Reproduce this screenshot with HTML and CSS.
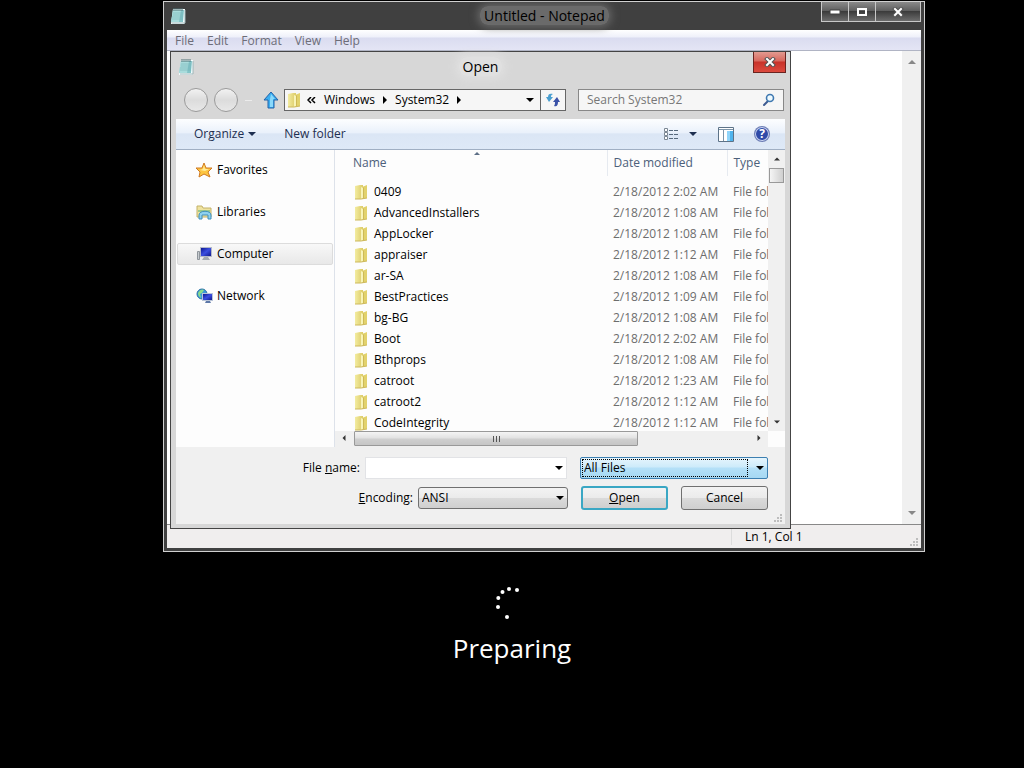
FILE: index.html
```html
<!DOCTYPE html>
<html lang="en">
<head>
    <meta charset="UTF-8">
    <meta name="viewport" content="width=device-width, initial-scale=1.0">
    <title>Untitled - Notepad</title>
    <link rel="stylesheet" href="styles.css">
</head>
<body>
    <!-- Shared icons -->
    <svg class="sprite" aria-hidden="true">
        <defs>
            <linearGradient id="g-folder" x1="0" x2="1">
                <stop offset="0" stop-color="#f3eca0"></stop>
                <stop offset="1" stop-color="#dccb68"></stop>
            </linearGradient>
            <linearGradient id="g-screen" x1="0" x2="1" y2="1">
                <stop offset="0" stop-color="#0d1690"></stop>
                <stop offset="0.5" stop-color="#3b4fe0"></stop>
                <stop offset="1" stop-color="#10188c"></stop>
            </linearGradient>
        </defs>
        <symbol id="folder" viewBox="0 0 14 16">
            <path d="M1 2l5-1h3v13l-3 1H1z" fill="url(#g-folder)"></path>
            <path d="M8 3l5-2v13l-5 1z" fill="#e2d26c"></path>
            <path d="M7 3l2 1v10l-2 1z" fill="#f8f4b8"></path>
            <path d="M9 4l1-1v11l-1 1z" fill="#cdb958"></path>
            <path d="M1 15h6l6-1" fill="none" stroke="#cdb95c"></path>
        </symbol>
        <symbol id="notepad" viewBox="0 0 16 18">
            <path d="M3 2h12v14l-1 1H1z" fill="#f5ffff"></path>
            <path d="M3 3h11l-1 12H1z" fill="#83c4c8"></path>
            <path d="M3 3h8L9 15H1z" fill="#a9dcdc"></path>
            <path d="M3 6h10M3 8h10M2 10h11M2 12h11" stroke="#6aa9ae" stroke-width="0.5"></path>
            <path d="M4 1v3M6 1v3M8 1v3M10 1v3M12 1v3" stroke="#4d6f73"></path>
            <path d="M15 3v13H2" fill="none" stroke="#9db4b8"></path>
        </symbol>
        <symbol id="down" viewBox="0 0 8 4"><path d="M0 0h8L4 4z" fill="currentColor"></path></symbol>
        <symbol id="up" viewBox="0 0 8 4"><path d="M0 4h8L4 0z" fill="currentColor"></path></symbol>
        <symbol id="right" viewBox="0 0 4 8"><path d="M0 0v8l4-4z" fill="currentColor"></path></symbol>
        <symbol id="left" viewBox="0 0 4 8"><path d="M4 0v8L0 4z" fill="currentColor"></path></symbol>
        <symbol id="cross" viewBox="0 0 12 10">
            <path d="M3 2l6 6M9 2L3 8" stroke="#555" stroke-width="4" stroke-linecap="square"></path>
            <path d="M3 2l6 6M9 2L3 8" stroke="#fff" stroke-width="2" stroke-linecap="square"></path>
        </symbol>
        <symbol id="grip" viewBox="0 0 9 9">
            <path d="M7 1h2M4 4h2M7 4h2M1 7h2M4 7h2M7 7h2" stroke="#bdbdbd" stroke-width="2"></path>
        </symbol>
    </svg>

    <main class="window">
        <header class="titlebar">
            <svg class="icon-notepad"><use href="#notepad"></use></svg>
            <h1 class="title"><span>Untitled - Notepad</span></h1>
            <div class="window-controls">
                <button type="button" class="ctl" aria-label="Minimize">
                    <svg width="12" height="6"><path d="M1 1h10v4H1z" fill="#fff" stroke="#444"></path></svg>
                </button>
                <button type="button" class="ctl" aria-label="Maximize">
                    <svg width="12" height="10"><path d="M2 2h8v6H2z" fill="none" stroke="#fff" stroke-width="2"></path></svg>
                </button>
                <button type="button" class="ctl ctl-close" aria-label="Close">
                    <svg width="12" height="10"><use href="#cross"></use></svg>
                </button>
            </div>
        </header>

        <nav class="menubar">
            <a href="#">File</a>
            <a href="#">Edit</a>
            <a href="#">Format</a>
            <a href="#">View</a>
            <a href="#">Help</a>
        </nav>

        <div class="editor">
            <textarea class="editor-text" aria-label="Document"></textarea>
            <div class="editor-scroll">
                <svg width="8" height="4"><use href="#up"></use></svg>
                <svg width="8" height="4"><use href="#down"></use></svg>
            </div>
        </div>

        <footer class="statusbar">
            <span class="position">Ln 1, Col 1</span>
            <svg class="grip"><use href="#grip"></use></svg>
        </footer>

        <section class="dialog" role="dialog" aria-labelledby="dialog-title">
            <header class="dialog-title">
                <svg class="icon-notepad"><use href="#notepad"></use></svg>
                <h2 class="title" id="dialog-title"><span>Open</span></h2>
                <button type="button" class="dialog-close" aria-label="Close">
                    <svg width="12" height="10"><use href="#cross"></use></svg>
                </button>
            </header>

            <div class="address-row">
                <button type="button" class="nav-btn" aria-label="Back"></button>
                <button type="button" class="nav-btn" aria-label="Forward"></button>
                <span class="history"></span>
                <button type="button" class="up-btn" aria-label="Up">
                    <svg width="16" height="18" viewBox="0 0 16 18">
                        <path d="M8 1l7 8h-4v8H5V9H1z" fill="#3aaef0" stroke="#2462a8"></path>
                        <path d="M8 3l4 5h-2v8H7V8z" fill="#8ad9fb"></path>
                    </svg>
                </button>
                <div class="address">
                    <svg class="icon-folder"><use href="#folder"></use></svg>
                    <svg class="chevrons" width="9" height="7" viewBox="0 0 9 7">
                        <path d="M4 0L1 3l3 3M8 0L5 3l3 3" fill="none" stroke="#000" stroke-width="1.500"></path>
                    </svg>
                    <a href="#">Windows</a>
                    <svg width="4" height="8"><use href="#right"></use></svg>
                    <a href="#">System32</a>
                    <svg width="4" height="8"><use href="#right"></use></svg>
                    <button type="button" class="address-drop" aria-label="Previous locations">
                        <svg width="8" height="4"><use href="#down"></use></svg>
                    </button>
                    <button type="button" class="refresh" aria-label="Refresh">
                        <svg width="16" height="14" viewBox="0 0 16 14">
                            <path d="M8 1C5 0 3 1 3 4H1l3 5 4-5H6c0-1 0-2 2-3z" fill="#4a9fd0"></path>
                            <path d="M9 13c3 1 4-1 4-4h2l-3-5-4 5h2c0 1 0 3-1 4z" fill="#3b52a8"></path>
                        </svg>
                    </button>
                </div>
                <div class="search">
                    <input type="text" placeholder="Search System32" aria-label="Search System32">
                    <svg width="14" height="14" viewBox="0 0 14 14">
                        <path d="M6 8l-4 4" stroke="#3d5a90" stroke-width="2" stroke-linecap="round"></path>
                        <circle cx="8" cy="5" r="3.500" fill="#eefaff" stroke="#3f78b0" stroke-width="1.600"></circle>
                    </svg>
                </div>
            </div>

            <div class="toolbar">
                <button type="button" class="tool">Organize <svg width="8" height="4"><use href="#down"></use></svg></button>
                <button type="button" class="tool">New folder</button>
                <div class="tool-icons">
                    <button type="button" class="tool tool-view" aria-label="Change view">
                        <svg width="16" height="13" viewBox="0 0 16 13">
                            <path d="M1.500 0.500h3v3h-3zM1.500 4.500h3v3h-3zM1.500 8.500h3v3h-3z" fill="#fff" stroke="#7c8894"></path>
                            <path d="M6 2.500h4M11 2.500h4M6 6.500h4M11 6.500h4M6 10.500h4M11 10.500h4" stroke="#56697c"></path>
                        </svg>
                        <svg width="8" height="4"><use href="#down"></use></svg>
                    </button>
                    <button type="button" class="tool" aria-label="Preview pane">
                        <svg width="16" height="15" viewBox="0 0 16 15">
                            <path d="M0.500 0.500h15v14h-15z" fill="#fff" stroke="#5d7388"></path>
                            <path d="M1 2.500h14M5.500 3v11" stroke="#7b93a8"></path>
                            <path d="M9 4h6v10H9z" fill="#4fb4ee"></path>
                            <path d="M9 4h3v10H9z" fill="#8fd4fa"></path>
                        </svg>
                    </button>
                    <button type="button" class="tool help" aria-label="Help"><span>?</span></button>
                </div>
            </div>

            <div class="panes">
                <nav class="places">
                    <a href="#" class="place">
                        <svg width="17" height="16" viewBox="0 0 17 16">
                            <path d="M8 1l2 5 6 0-4 4 2 5-6-3-5 3 1-5-4-4 6 0z" fill="#fdc540" stroke="#cf7a22"></path>
                            <path d="M8 3l1 4 4 0-4 2-5-1 3-1z" fill="#ffec9a"></path>
                        </svg>
                        Favorites
                    </a>
                    <a href="#" class="place">
                        <svg width="17" height="16" viewBox="0 0 17 16">
                            <path d="M1 13V2h5l1 2h8v9z" fill="#efe3a0" stroke="#c4b268"></path>
                            <path d="M2 6h12v2H2z" fill="#9cc98c"></path>
                            <path d="M3 15V11c0-5 12-5 12 0v4h-3v-4H6v4z" fill="#8fd2f0" stroke="#3e8fbc"></path>
                        </svg>
                        Libraries
                    </a>
                    <a href="#" class="place selected">
                        <svg width="17" height="16" viewBox="0 0 17 16">
                            <path d="M1.500 5.500h2v8h-2z" fill="#c7ccd0" stroke="#8e959b"></path>
                            <path d="M4 1h12v10H4z" fill="#b4b9c8"></path>
                            <path d="M5 2h10v8H5z" fill="url(#g-screen)"></path>
                            <path d="M8 11h4l2 3H6z" fill="#a5abb2"></path>
                        </svg>
                        Computer
                    </a>
                    <a href="#" class="place">
                        <svg width="17" height="16" viewBox="0 0 17 16">
                            <circle cx="6" cy="6" r="5" fill="#3b9cd8" stroke="#2b6fa6"></circle>
                            <path d="M2 5c2-4 5-4 6-3L6 5 4 6l1 4C3 9 2 7 2 5z" fill="#8bdc8a"></path>
                            <path d="M6 5h11v8H6z" fill="#b9c4d8"></path>
                            <path d="M7 6h9v6H7z" fill="url(#g-screen)"></path>
                            <path d="M10 13h4l1 2H9z" fill="#5d78a8"></path>
                        </svg>
                        Network
                    </a>
                </nav>

                <div class="files">
                    <div class="file-view">
                        <table class="file-table">
                            <thead>
                                <tr>
                                    <th class="col-name" scope="col">Name<svg class="sort" width="6" height="3" viewBox="0 0 8 4"><use href="#up"></use></svg></th>
                                    <th class="col-date" scope="col">Date modified</th>
                                    <th class="col-type" scope="col">Type</th>
                                </tr>
                            </thead>
                            <tbody>
                                <tr><td><svg class="icon-folder"><use href="#folder"></use></svg>0409</td><td>2/18/2012 2:02 AM</td><td>File folder</td></tr>
                                <tr><td><svg class="icon-folder"><use href="#folder"></use></svg>AdvancedInstallers</td><td>2/18/2012 1:08 AM</td><td>File folder</td></tr>
                                <tr><td><svg class="icon-folder"><use href="#folder"></use></svg>AppLocker</td><td>2/18/2012 1:08 AM</td><td>File folder</td></tr>
                                <tr><td><svg class="icon-folder"><use href="#folder"></use></svg>appraiser</td><td>2/18/2012 1:12 AM</td><td>File folder</td></tr>
                                <tr><td><svg class="icon-folder"><use href="#folder"></use></svg>ar-SA</td><td>2/18/2012 1:08 AM</td><td>File folder</td></tr>
                                <tr><td><svg class="icon-folder"><use href="#folder"></use></svg>BestPractices</td><td>2/18/2012 1:09 AM</td><td>File folder</td></tr>
                                <tr><td><svg class="icon-folder"><use href="#folder"></use></svg>bg-BG</td><td>2/18/2012 1:08 AM</td><td>File folder</td></tr>
                                <tr><td><svg class="icon-folder"><use href="#folder"></use></svg>Boot</td><td>2/18/2012 2:02 AM</td><td>File folder</td></tr>
                                <tr><td><svg class="icon-folder"><use href="#folder"></use></svg>Bthprops</td><td>2/18/2012 1:08 AM</td><td>File folder</td></tr>
                                <tr><td><svg class="icon-folder"><use href="#folder"></use></svg>catroot</td><td>2/18/2012 1:23 AM</td><td>File folder</td></tr>
                                <tr><td><svg class="icon-folder"><use href="#folder"></use></svg>catroot2</td><td>2/18/2012 1:12 AM</td><td>File folder</td></tr>
                                <tr><td><svg class="icon-folder"><use href="#folder"></use></svg>CodeIntegrity</td><td>2/18/2012 1:12 AM</td><td>File folder</td></tr>
                            </tbody>
                        </table>
                    </div>
                    <div class="vscroll">
                        <svg width="6" height="4"><use href="#up"></use></svg>
                        <span class="vthumb"></span>
                        <svg width="6" height="4"><use href="#down"></use></svg>
                    </div>
                    <div class="hscroll">
                        <svg width="4" height="6"><use href="#left"></use></svg>
                        <span class="htrack"><span class="hthumb"><i></i><i></i><i></i></span></span>
                        <svg width="4" height="6"><use href="#right"></use></svg>
                    </div>
                </div>
            </div>

            <form class="dialog-form">
                <div class="form-row">
                    <label for="file-name">File <u>n</u>ame:</label>
                    <div class="combo file-name">
                        <input type="text" id="file-name">
                        <svg width="8" height="4"><use href="#down"></use></svg>
                    </div>
                    <div class="combo file-type">
                        <select aria-label="File type">
                            <option>All Files</option>
                        </select>
                        <svg width="8" height="4"><use href="#down"></use></svg>
                    </div>
                </div>
                <div class="form-row">
                    <label for="encoding"><u>E</u>ncoding:</label>
                    <div class="combo encoding">
                        <select id="encoding">
                            <option>ANSI</option>
                        </select>
                        <svg width="8" height="4"><use href="#down"></use></svg>
                    </div>
                    <div class="actions">
                        <button type="button" class="btn btn-default"><u>O</u>pen</button>
                        <button type="button" class="btn">Cancel</button>
                    </div>
                </div>
                <svg class="grip"><use href="#grip"></use></svg>
            </form>
        </section>
    </main>

    <div class="boot">
        <svg class="spinner" width="32" height="36" viewBox="0 0 32 36" fill="#fff">
            <circle cx="21" cy="5" r="2"></circle>
            <circle cx="13" cy="4" r="2"></circle>
            <circle cx="6.500" cy="7" r="2"></circle>
            <circle cx="2.300" cy="13" r="2"></circle>
            <circle cx="2" cy="22" r="2"></circle>
            <circle cx="11" cy="32" r="2"></circle>
        </svg>
        <p>Preparing</p>
    </div>
</body>
</html>
```
FILE: styles.css
```css
* {
    margin: 0;
    padding: 0;
    box-sizing: border-box;
}

body {
    font-family: 'Open Sans', 'Noto Sans', sans-serif;
    font-size: 12px;
    line-height: 16px;
    background: #000;
    color: #000;
    min-height: 100vh;
    padding-top: 1px;
}

button,
input,
select,
textarea {
    font: inherit;
    color: inherit;
    border: none;
    background: none;
    outline: none;
}

a {
    color: inherit;
    text-decoration: none;
}

svg {
    display: block;
    flex: none;
}

.sprite {
    position: absolute;
    width: 0;
    height: 0;
}

.icon-notepad {
    width: 16px;
    height: 18px;
}

.icon-folder {
    width: 14px;
    height: 16px;
}

/* Notepad window */
.window {
    position: relative;
    margin: 0 99px 0 163px;
    border: 1px solid #d0d0d0;
    background: #404040;
    padding: 0 3px 3px;
}

.titlebar {
    display: flex;
    align-items: center;
    height: 28px;
    padding-left: 3px;
}

.title {
    flex: 1;
    font-size: 14px;
    font-weight: 400;
    line-height: 20px;
    text-align: center;
}

.titlebar .title {
    padding-left: 82px;
}

.titlebar .title span {
    padding: 0 4px;
    border-radius: 8px;
    background: #6a6a6a;
    box-shadow: 0 0 8px 2px #6a6a6a;
}

.window-controls {
    display: flex;
    align-self: flex-start;
    border: 1px solid #c8c8c8;
    border-top: none;
}

.ctl {
    width: 27px;
    height: 19px;
    display: flex;
    align-items: center;
    justify-content: center;
    background: linear-gradient(#8a8a8a, #606060 45%, #3c3c3c 50%, #6c6c6c);
    border-right: 1px solid #c8c8c8;
}

.ctl-close {
    width: 44px;
    border-right: none;
}

.menubar {
    display: flex;
    gap: 13px;
    height: 21px;
    padding: 3px 8px 0;
    color: #6d6d78;
    background: linear-gradient(#fff, #eef0fa 35%, #dadcf0 40%, #e4e5f5);
    border-bottom: 1px solid #b0b4c4;
}

.editor {
    display: flex;
    min-height: 474px;
    background: #fff;
    border-bottom: 1px solid #888;
}

.editor-text {
    flex: 1;
    resize: none;
}

.editor-scroll {
    width: 19px;
    padding: 9px 4px;
    display: flex;
    flex-direction: column;
    align-items: center;
    justify-content: space-between;
    background: #f0f0f0;
    color: #888;
}

.statusbar {
    position: relative;
    display: flex;
    justify-content: flex-end;
    height: 23px;
    padding: 4px 0 3px;
    background: #f0eeee;
}

.position {
    width: 190px;
    padding-left: 13px;
    border-left: 1px solid #dcdcdc;
}

.grip {
    position: absolute;
    right: 3px;
    bottom: 1px;
    width: 9px;
    height: 9px;
}

/* Open dialog, floats over the editor */
.dialog {
    position: absolute;
    top: 49px;
    left: 6px;
    right: 133px;
    padding: 0 5px 4px;
    border: 1px solid #444;
    background: #d7d7d7;
}

.dialog-title {
    display: flex;
    align-items: center;
    height: 29px;
    padding-left: 2px;
    margin-right: -1px;
}

.dialog-title .title {
    padding-left: 14px;
}

.dialog-title .title span {
    padding: 0 4px;
    border-radius: 8px;
    background: #e0e0e0;
    box-shadow: 0 0 8px 3px #e0e0e0;
}

.dialog-close {
    width: 33px;
    height: 21px;
    align-self: flex-start;
    display: flex;
    align-items: center;
    justify-content: center;
    border: 1px solid #6a2420;
    border-top: none;
    background: linear-gradient(#e29a90, #d8685e 45%, #c8322a 50%, #dc4a3e);
}

.address-row {
    display: flex;
    align-items: center;
    height: 38px;
    padding: 0 1px 0 8px;
}

.nav-btn {
    width: 24px;
    height: 24px;
    margin-right: 6px;
    border: 1px solid #9a9a9a;
    border-radius: 50%;
    background: linear-gradient(#f2f2f2, #dcdcdc 50%, #e8e8e8);
}

.history {
    width: 7px;
    height: 1px;
    margin: 0 11px 0 1px;
    background: #ececec;
}

.up-btn {
    margin-right: 5px;
}

.address {
    flex: 1;
    display: flex;
    align-items: center;
    gap: 8px;
    height: 22px;
    padding-left: 2px;
    border: 1px solid #666;
    background: #f6f6f6;
}

.chevrons {
    margin-left: -2px;
}

.address-drop {
    width: 20px;
    margin-left: auto;
    margin-right: -8px;
    display: flex;
    justify-content: center;
}

.refresh {
    width: 25px;
    height: 20px;
    display: flex;
    align-items: center;
    justify-content: center;
    border-left: 1px solid #666;
}

.search {
    display: flex;
    align-items: center;
    width: 206px;
    height: 22px;
    margin-left: 12px;
    padding: 0 7px 0 8px;
    border: 1px solid #888;
    background: #f6f6f6;
}

.search input {
    flex: 1;
    min-width: 0;
}

.search input::placeholder {
    color: #777;
    opacity: 1;
}

.toolbar {
    display: flex;
    align-items: center;
    gap: 28px;
    height: 31px;
    padding: 0 16px 0 18px;
    color: #1e2f50;
    background: linear-gradient(#fdfeff, #eaf1fb 45%, #dbe6f5 50%, #dee9f7);
    border-bottom: 1px solid #a0afc3;
}

.tool {
    display: flex;
    align-items: center;
    gap: 4px;
}

.tool-icons {
    display: flex;
    align-items: center;
    gap: 21px;
    margin-left: auto;
}

.tool-view {
    gap: 10px;
}

.help span {
    width: 14px;
    height: 14px;
    border-radius: 50%;
    background: #2f4aa8;
    box-shadow: inset 0 0 0 1px #c9d3ee, 0 0 0 1px #6f7fb5;
    color: #fff;
    font-weight: 700;
    line-height: 14px;
    text-align: center;
}

.panes {
    display: flex;
    background: #fdfdfd;
}

.places {
    flex: none;
    width: 159px;
    padding: 9px 1px;
    display: flex;
    flex-direction: column;
    gap: 20px;
    border-right: 1px solid #dde2ea;
}

.place {
    display: flex;
    align-items: center;
    gap: 4px;
    height: 22px;
    padding-left: 18px;
    border: 1px solid transparent;
    border-radius: 2px;
}

.place.selected {
    border-color: #dcdcdc;
    background: linear-gradient(#f8f8f8, #e8e8e8);
}

.files {
    flex: 1;
    min-width: 0;
    display: grid;
    grid-template-columns: 1fr 17px;
    grid-template-rows: 281px 16px;
}

.file-view {
    overflow: hidden;
    padding-left: 12px;
}

.file-table {
    width: 100%;
    table-layout: fixed;
    border-collapse: collapse;
    text-align: left;
}

.file-table th {
    position: relative;
    height: 26px;
    padding-left: 6px;
    font-weight: 400;
    color: #4c607a;
    border-right: 1px solid #e6eaf0;
}

.file-table th:last-child {
    border-right: none;
}

.file-table tbody::before {
    content: '';
    display: block;
    height: 5px;
}

.file-table td {
    height: 21px;
    padding-left: 6px;
    color: #6d6d6d;
    white-space: nowrap;
    overflow: hidden;
}

.file-table td:first-child {
    padding-left: 7px;
    color: #000;
}

.file-table td .icon-folder {
    display: inline-block;
    vertical-align: -4px;
    margin-right: 6px;
}

.col-date {
    width: 120px;
}

.col-type {
    width: 41px;
}

.sort {
    position: absolute;
    top: 2px;
    left: 49%;
    color: #5d6f86;
}

.vscroll {
    display: flex;
    flex-direction: column;
    align-items: center;
    padding: 7px 0;
    background: #f0f0f0;
    color: #333;
}

.vthumb {
    width: 15px;
    height: 15px;
    margin: 7px 0 auto;
    border: 1px solid #999;
    background: linear-gradient(90deg, #f5f5f5, #cfcfcf);
}

.hscroll {
    display: flex;
    align-items: flex-start;
    padding: 0 7px;
    background: #f0f0f0;
    color: #333;
}

.hscroll > svg {
    margin-top: 4px;
}

.htrack {
    flex: 1;
    margin: 0 8px;
}

.hthumb {
    display: flex;
    align-items: center;
    justify-content: center;
    gap: 2px;
    width: 72%;
    height: 15px;
    border: 1px solid #999;
    border-radius: 1px;
    background: linear-gradient(#f4f4f4, #e2e2e2 45%, #cfcfcf 55%, #c6c6c6);
}

.hthumb i {
    width: 1px;
    height: 6px;
    background: #555;
}

/* File name, encoding and buttons */
.dialog-form {
    position: relative;
    display: flex;
    flex-direction: column;
    gap: 6px;
    padding: 9px 17px 14px 0;
    background: #f0f0f0;
}

.form-row {
    display: flex;
    align-items: center;
    justify-content: flex-end;
    height: 24px;
}

.combo {
    position: relative;
    height: 22px;
    margin-left: 5px;
}

.combo input,
.combo select {
    display: block;
    width: 100%;
    height: 100%;
    padding: 0 3px;
    appearance: none;
}

.combo svg {
    position: absolute;
    top: 9px;
    right: 4px;
    color: #000;
}

.file-name {
    width: 202px;
}

.file-name input {
    background: #fff;
    border: 1px solid #e2e3e6;
}

.file-type {
    width: 188px;
    margin-left: 13px;
}

.file-type select {
    border: 1px solid #3c7fb1;
    border-radius: 2px;
    background: linear-gradient(#e6f5fd, #cdebfa 45%, #b4e0f8 50%, #a6d8f3);
}

/* Focus ring */
.file-type::after {
    content: '';
    position: absolute;
    top: 2px;
    right: 20px;
    bottom: 2px;
    left: 2px;
    border: 1px dotted #000;
    pointer-events: none;
}

.encoding {
    width: 150px;
}

.encoding select,
.btn {
    border: 1px solid #707070;
    border-radius: 3px;
    background: linear-gradient(#f3f3f3, #ebebeb 48%, #dadada 52%, #cfcfcf);
}

.actions {
    display: flex;
    gap: 13px;
    margin-left: 13px;
}

.btn {
    width: 87px;
    height: 24px;
}

.btn-default {
    border: 2px solid #3aa7c4;
}

/* Boot screen message */
.boot {
    display: flex;
    flex-direction: column;
    align-items: center;
    padding-top: 33px;
    color: #fff;
}

.boot p {
    margin-top: 9px;
    font-size: 26px;
    line-height: 36px;
}
```
